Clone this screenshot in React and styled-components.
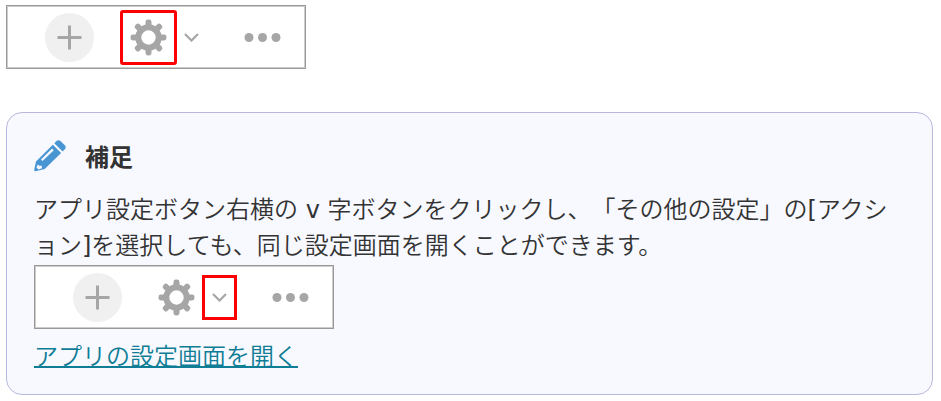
import React from "react";
import styled, { createGlobalStyle } from "styled-components";

const TEETH = [0, 45, 90, 135, 180, 225, 270, 315];

function GearIcon() {
  return (
    <svg width="37" height="37" viewBox="-18.5 -18.5 37 37" fill="#a6a6a6" aria-hidden="true">
      {TEETH.map((angle) => (
        <rect key={angle} x="-3" y="-18" width="6" height="8" rx="2.4" transform={`rotate(${angle})`} />
      ))}
      <circle r="10.2" fill="none" stroke="#a6a6a6" strokeWidth="6" />
    </svg>
  );
}

function PlusIcon() {
  return (
    <svg width="25" height="25" viewBox="0 0 25 25" stroke="#a6a6a6" strokeWidth="3" aria-hidden="true">
      <path d="M12.5 0.5v24M0.5 12.5h24" />
    </svg>
  );
}

function ChevronIcon() {
  return (
    <svg width="15" height="9" viewBox="0 0 15 9" fill="none" stroke="#a6a6a6" strokeWidth="2.2" aria-hidden="true">
      <path d="M1 1l6.500 6.500L14 1" />
    </svg>
  );
}

function DotsIcon() {
  return (
    <svg width="37" height="9" viewBox="0 0 37 9" fill="#a6a6a6" aria-hidden="true">
      <circle cx="5" cy="4.5" r="4.5" />
      <circle cx="18.5" cy="4.5" r="4.5" />
      <circle cx="32" cy="4.5" r="4.5" />
    </svg>
  );
}

function PencilIcon() {
  return (
    <svg width="32" height="32" viewBox="0 0 32 32" fill="#4796d3" aria-hidden="true">
      <path d="M20.300 3.200l2.200-2.200q2-1.700 4 0l4.300 4.300q1.700 2 0 4l-2.200 2.200z" />
      <path
        fillRule="evenodd"
        d="M18.800 4.700l8.300 8.300L10.700 29L1.500 31.200Q0 31.300 .2 29.800L2 21.500zM7 19.500l1.500 1.500L19.800 10.300l-1.700-1.700zM3.800 24.500l-1.300 3l1.900 1.900l3.600-1.200l-.3-2.400l-2.200-.1z"
      />
    </svg>
  );
}

function Toolbar({ marked }) {
  return (
    <Bar>
      <AddButton type="button" aria-label="追加">
        <PlusIcon />
      </AddButton>
      <GearButton type="button" aria-label="アプリ設定" $marked={marked === "gear"}>
        <GearIcon />
      </GearButton>
      <ChevronButton type="button" aria-label="その他の設定" $marked={marked === "chevron"}>
        <ChevronIcon />
      </ChevronButton>
      <MoreButton type="button" aria-label="オプション">
        <DotsIcon />
      </MoreButton>
    </Bar>
  );
}

export default function App() {
  return (
    <>
      <GlobalStyle />
      <Page>
        <Toolbar marked="gear" />
        <Note>
          <NoteHeader>
            <PencilIcon />
            <NoteTitle>補足</NoteTitle>
          </NoteHeader>
          <NoteText>
            アプリ設定ボタン右横の v 字ボタンをクリックし、「その他の設定」の[アクション]を選択しても、同じ設定画面を開くことができます。
          </NoteText>
          <Toolbar marked="chevron" />
          <NoteLink href="#settings">アプリの設定画面を開く</NoteLink>
        </Note>
      </Page>
    </>
  );
}

const GlobalStyle = createGlobalStyle`
  * {
    box-sizing: border-box;
  }
  body {
    margin: 0;
    background: #fff;
    color: #333;
    font-family: "DejaVu Sans", "Noto Sans CJK JP DemiLight", "Noto Sans CJK JP", sans-serif;
    font-size: 24px;
    line-height: 36px;
    text-spacing-trim: space-all;
  }
`;

const Page = styled.main`
  display: flex;
  flex-direction: column;
  gap: 43px;
  padding: 5px 8px 6px 6px;
`;

const Bar = styled.div`
  display: flex;
  align-items: center;
  width: fit-content;
  padding: 4px 21px 3px 38px;
  border: 1px solid #999;
  box-shadow: inset 0 0 0 1px #ccc;
  background: #fff;
`;

const IconButton = styled.button`
  display: flex;
  align-items: center;
  justify-content: center;
  padding: 0;
  border: 3px solid ${(props) => (props.$marked ? "#f00" : "transparent")};
  background: none;
  cursor: pointer;
`;

const AddButton = styled(IconButton)`
  width: 49px;
  height: 49px;
  margin-right: 26px;
  border: 0;
  border-radius: 50%;
  background: #f0f0f0;
`;

const GearButton = styled(IconButton)`
  width: 57px;
  height: 55px;
  border-radius: 3px;
`;

const ChevronButton = styled(IconButton)`
  width: 35px;
  height: 45px;
  margin-left: -3px;
`;

const MoreButton = styled(IconButton)`
  margin-left: 32px;
`;

const Note = styled.section`
  display: flex;
  flex-direction: column;
  padding: 25px 27px 19px;
  border: 1px solid #b8b8dc;
  border-radius: 16px;
  background: #f8f9ff;
`;

const NoteHeader = styled.header`
  display: flex;
  align-items: center;
  gap: 19px;
  margin-bottom: 18px;
`;

const NoteTitle = styled.h2`
  margin: 0;
  font-family: "Noto Sans CJK JP", sans-serif;
  font-size: 24px;
  font-weight: 700;
  line-height: 36px;
`;

const NoteText = styled.p`
  margin: 0 0 1px;
`;

const NoteLink = styled.a`
  align-self: flex-start;
  margin-top: 10px;
  color: #0f7d95;
  text-decoration-thickness: 2px;
`;
